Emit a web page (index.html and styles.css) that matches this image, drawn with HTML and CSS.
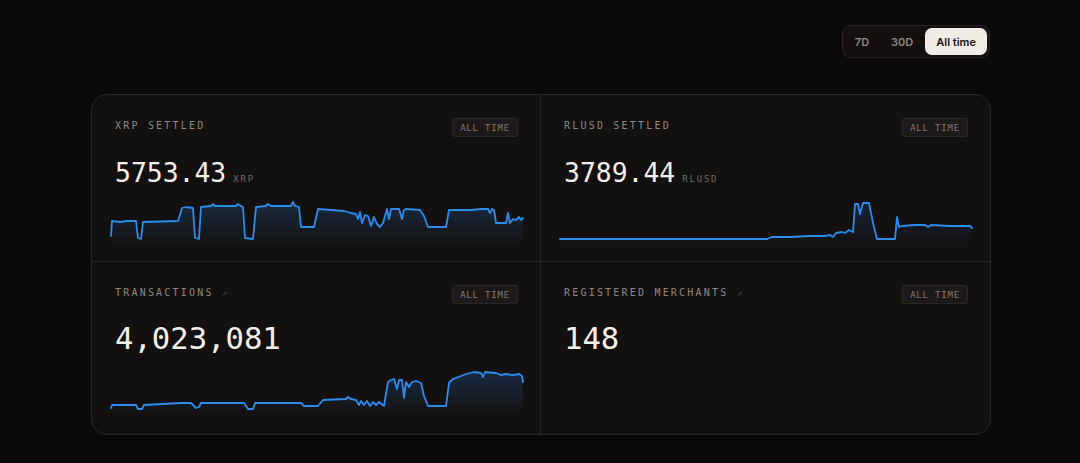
FILE: index.html
```html
<!DOCTYPE html>
<html>
<head>
<meta charset="utf-8">
<link rel="stylesheet" href="styles.css">
</head>
<body>
<div class="wrap">
  <div class="toolbar">
    <div class="toggle">
      <button class="tg">7D</button>
      <button class="tg">30D</button>
      <button class="tg active">All time</button>
    </div>
  </div>
  <div class="card">
    <div class="cell">
      <div class="head">
        <span class="label">XRP SETTLED</span>
        <span class="badge">ALL TIME</span>
      </div>
      <div class="value small">5753.43<span class="unit">XRP</span></div>
      <svg class="chart" viewBox="0 0 416 48" preserveAspectRatio="none">
        <defs>
          <linearGradient id="g1" x1="0" y1="0" x2="0" y2="1">
            <stop offset="0" stop-color="#2d8ceb" stop-opacity="0.22"/>
            <stop offset="1" stop-color="#2d8ceb" stop-opacity="0"/>
          </linearGradient>
        </defs>
        <path class="fill" fill="url(#g1)" d="M2 37 L3 22 L12 23 L17 22 L27 22 L29 39 L32 40 L34 23 L69 22 L73 9 L77 8 L84 9 L86 39 L90 40 L92 8 L102 7 L104 5 L106 7 L127 7 L129 5 L132 7 L134 8 L136 39 L144 40 L147 8 L157 7 L159 5 L162 7 L182 7 L184 3 L186 7 L190 8 L192 28 L205 28 L209 10 L235 12 L242 14 L247 15 L249 20 L251 13 L253 24 L256 16 L259 17 L262 27 L265 18 L268 25 L271 28 L274 24 L278 10 L280 20 L282 10 L290 10 L293 20 L295 11 L297 10 L311 11 L315 17 L319 28 L337 28 L340 11 L362 11 L372 10 L379 10 L381 14 L383 10 L385 11 L387 24 L397 24 L399 14 L401 24 L404 20 L407 21 L410 18 L412 21 L414 19 L414 48 L2 48 Z"/>
        <path class="line" d="M2 37 L3 22 L12 23 L17 22 L27 22 L29 39 L32 40 L34 23 L69 22 L73 9 L77 8 L84 9 L86 39 L90 40 L92 8 L102 7 L104 5 L106 7 L127 7 L129 5 L132 7 L134 8 L136 39 L144 40 L147 8 L157 7 L159 5 L162 7 L182 7 L184 3 L186 7 L190 8 L192 28 L205 28 L209 10 L235 12 L242 14 L247 15 L249 20 L251 13 L253 24 L256 16 L259 17 L262 27 L265 18 L268 25 L271 28 L274 24 L278 10 L280 20 L282 10 L290 10 L293 20 L295 11 L297 10 L311 11 L315 17 L319 28 L337 28 L340 11 L362 11 L372 10 L379 10 L381 14 L383 10 L385 11 L387 24 L397 24 L399 14 L401 24 L404 20 L407 21 L410 18 L412 21 L414 19"/>
      </svg>
    </div>
    <div class="cell">
      <div class="head">
        <span class="label">RLUSD SETTLED</span>
        <span class="badge">ALL TIME</span>
      </div>
      <div class="value small">3789.44<span class="unit">RLUSD</span></div>
      <svg class="chart" viewBox="0 0 416 48" preserveAspectRatio="none">
        <defs>
          <linearGradient id="g2" x1="0" y1="0" x2="0" y2="1">
            <stop offset="0" stop-color="#2d8ceb" stop-opacity="0.16"/>
            <stop offset="1" stop-color="#2d8ceb" stop-opacity="0"/>
          </linearGradient>
        </defs>
        <path class="fill" fill="url(#g2)" d="M2 40 L142 40 L209 40 L214 38 L232 38 L252 37 L267 37 L272 36 L275 38 L278 34 L284 33 L287 34 L291 31 L295 33 L297 5 L300 5 L302 15 L305 4 L311 4 L313 14 L315 24 L319 40 L337 40 L339 18 L341 28 L344 27 L357 26 L367 26 L370 28 L373 26 L392 27 L412 27 L414 29 L414 48 L2 48 Z"/>
        <path class="line" d="M2 40 L142 40 L209 40 L214 38 L232 38 L252 37 L267 37 L272 36 L275 38 L278 34 L284 33 L287 34 L291 31 L295 33 L297 5 L300 5 L302 15 L305 4 L311 4 L313 14 L315 24 L319 40 L337 40 L339 18 L341 28 L344 27 L357 26 L367 26 L370 28 L373 26 L392 27 L412 27 L414 29"/>
      </svg>
    </div>
    <div class="cell">
      <div class="head">
        <span class="label">TRANSACTIONS <span class="arrow">↗</span></span>
        <span class="badge">ALL TIME</span>
      </div>
      <div class="value">4,023,081</div>
      <svg class="chart" viewBox="0 0 416 48" preserveAspectRatio="none">
        <defs>
          <linearGradient id="g3" x1="0" y1="0" x2="0" y2="1">
            <stop offset="0" stop-color="#2d8ceb" stop-opacity="0.22"/>
            <stop offset="1" stop-color="#2d8ceb" stop-opacity="0"/>
          </linearGradient>
        </defs>
        <path class="fill" fill="url(#g3)" d="M2 41 L3 38 L27 38 L29 42 L33 42 L35 38 L72 36 L82 36 L87 41 L90 40 L92 36 L135 36 L139 42 L144 42 L146 36 L192 36 L195 39 L209 39 L214 33 L237 32 L239 30 L242 32 L247 33 L250 38 L252 34 L255 38 L258 34 L261 39 L264 35 L267 38 L270 35 L275 39 L279 15 L282 13 L285 12 L288 22 L290 13 L293 13 L295 31 L297 15 L300 20 L303 15 L307 14 L312 16 L315 29 L319 39 L337 39 L340 16 L344 12 L352 9 L357 7 L365 5 L372 6 L374 10 L376 5 L387 6 L392 8 L397 7 L404 8 L410 7 L413 9 L414 15 L414 48 L2 48 Z"/>
        <path class="line" d="M2 41 L3 38 L27 38 L29 42 L33 42 L35 38 L72 36 L82 36 L87 41 L90 40 L92 36 L135 36 L139 42 L144 42 L146 36 L192 36 L195 39 L209 39 L214 33 L237 32 L239 30 L242 32 L247 33 L250 38 L252 34 L255 38 L258 34 L261 39 L264 35 L267 38 L270 35 L275 39 L279 15 L282 13 L285 12 L288 22 L290 13 L293 13 L295 31 L297 15 L300 20 L303 15 L307 14 L312 16 L315 29 L319 39 L337 39 L340 16 L344 12 L352 9 L357 7 L365 5 L372 6 L374 10 L376 5 L387 6 L392 8 L397 7 L404 8 L410 7 L413 9 L414 15"/>
      </svg>
    </div>
    <div class="cell">
      <div class="head">
        <span class="label">REGISTERED MERCHANTS <span class="arrow">↗</span></span>
        <span class="badge">ALL TIME</span>
      </div>
      <div class="value">148</div>
    </div>
  </div>
</div>
</body>
</html>
```

FILE: styles.css
```css
* { box-sizing: border-box; }
html, body { margin: 0; padding: 0; }
body {
  background: #0c0909;
  width: 1080px;
  height: 463px;
  overflow: hidden;
  font-family: "DejaVu Sans Mono", "Liberation Mono", monospace;
}
.wrap {
  width: 900px;
  margin-left: 91px;
  padding-top: 25px;
}
.toolbar {
  display: flex;
  justify-content: flex-end;
}
.toggle {
  display: flex;
  align-items: center;
  gap: 2px;
  height: 33px;
  padding: 2px;
  border: 1px solid #2a2524;
  border-radius: 9px;
  background: #141010;
  margin-right: 1px;
}
.tg {
  font-family: Inter, "Noto Sans", sans-serif;
  font-size: 11px;
  font-weight: 600;
  color: #8d8782;
  background: transparent;
  border: 0;
  height: 27px;
  padding: 0 10px;
  border-radius: 7px;
  cursor: pointer;
}
.tg.active {
  background: #f1ece5;
  color: #16110f;
  padding: 0 11px;
}
.card {
  margin-top: 36px;
  display: grid;
  grid-template-columns: minmax(0, 1fr) minmax(0, 1fr);
  grid-template-rows: 167px 172px;
  border: 1px solid #2a2625;
  border-radius: 16px;
  background: #131010;
  overflow: hidden;
}
.cell {
  padding: 23px 22px 0 23px;
  display: flex;
  flex-direction: column;
  min-width: 0;
}
.cell:nth-child(1), .cell:nth-child(3) { border-right: 1px solid #2a2625; }
.cell:nth-child(1), .cell:nth-child(2) { border-bottom: 1px solid #2a2625; }
.head {
  display: flex;
  justify-content: space-between;
  align-items: center;
  height: 19px;
}
.label {
  font-size: 10px;
  letter-spacing: 2.2px;
  color: #8e8883;
  margin-top: -4px;
}
.arrow {
  color: #4a4542;
  font-size: 9px;
  letter-spacing: 0;
}
.badge {
  font-size: 9px;
  letter-spacing: 0.8px;
  color: #7f7a76;
  background: #1c1918;
  border: 1px solid #2b2726;
  border-radius: 3px;
  height: 19px;
  width: 66px;
  display: flex;
  align-items: center;
  justify-content: center;
}
.value {
  margin-top: 18px;
  font-size: 30.6px;
  line-height: 34px;
  color: #f3efea;
  display: flex;
  align-items: baseline;
}
.value.small {
  font-size: 26.4px;
  margin-top: 20px;
  line-height: 32px;
}
.unit {
  font-size: 9px;
  letter-spacing: 1.8px;
  color: #6f6a66;
  margin-left: 7px;
}
.chart {
  display: block;
  width: 416px;
  height: 48px;
  margin-left: -6px;
  margin-top: 4px;
  overflow: visible;
}
.cell:nth-child(3) .chart { margin-top: 11px; }
.line {
  fill: none;
  stroke: #2d8ceb;
  stroke-width: 1.8;
  stroke-linejoin: round;
  stroke-linecap: round;
}
```
